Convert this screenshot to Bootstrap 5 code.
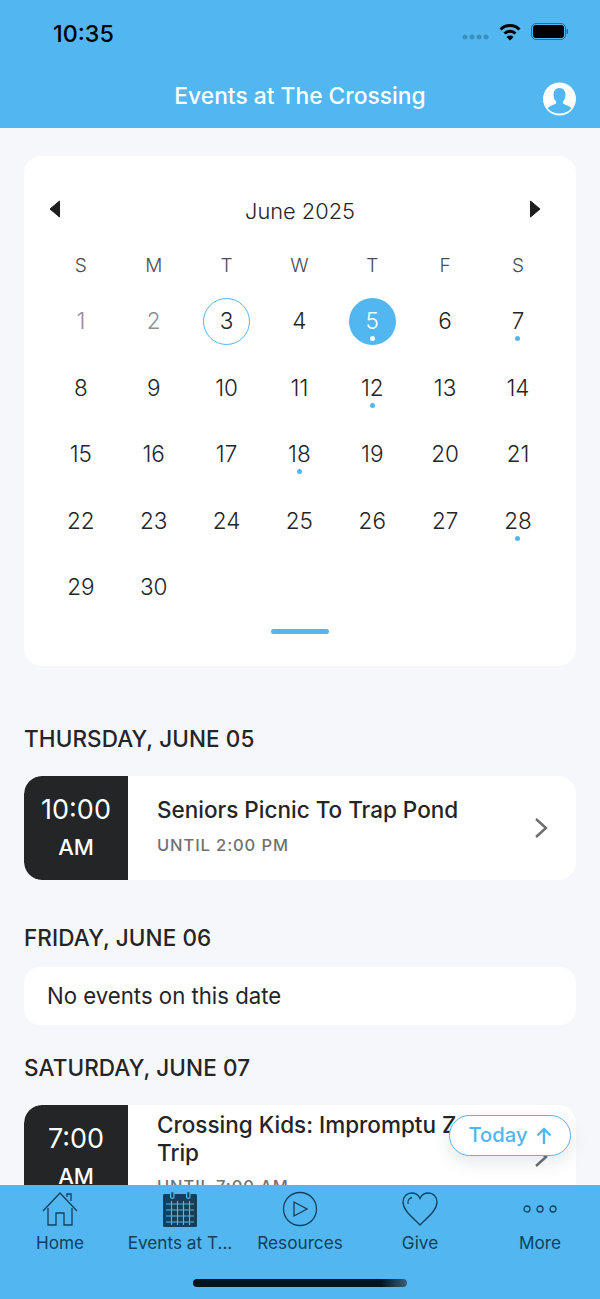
<!DOCTYPE html>
<html lang="en"><head><meta charset="utf-8"><title>Events</title>
<link href="https://cdn.jsdelivr.net/npm/bootstrap@5.3.0/dist/css/bootstrap.min.css" rel="stylesheet">
<style>
:root{--sky:#52b6f0;--ink:#232527;--tabink:#12405c}
html,body{margin:0;height:1299px;overflow:hidden}
body{font-family:Inter,"Liberation Sans",sans-serif;background:#f5f7fb;color:var(--ink)}
.app{height:1299px;width:600px;position:relative}
.topbar{height:128px;background:var(--sky);flex:none}
.status{height:66px;padding:0 32px 0 53px}
.clock{font-size:23.300px;font-weight:500;color:#000;line-height:1;margin-top:1px}
.titlebar{height:62px;padding:0 24px 0 0;position:relative}
.apptitle{font-size:22.800px;font-weight:500;color:#fff;position:absolute;left:0;right:0;top:14px;text-align:center;line-height:32px}
.avatar{position:absolute;left:543px;top:16px}
.content{flex:1 1 0;min-height:0;overflow:hidden;padding:28px 24px 0}
.calcard{height:510px;background:#fff;border-radius:18px;padding:0 21px;position:relative}
.calhead{height:111px;padding-top:37px}
.navprev{margin:7px 10px 0 4px;flex:none}
.navnext{margin:7px 14px 0 0;flex:none}
.month{font-size:21.800px;font-weight:300;line-height:36px;text-align:center;flex:1}
.wk{display:grid;grid-template-columns:repeat(7,1fr);text-align:center;margin-left:-.6px;margin-right:.6px}
.wkd{font-size:19px;font-weight:300;color:#4a4c4f;line-height:20px;height:20px}
.wkrow{margin-top:-11px;margin-bottom:12px}
.daycell{height:66.5px;display:flex;align-items:center;justify-content:center;position:relative;font-size:22.500px;font-weight:300}
.daycell.off{color:#8e9092}
.circ{width:47px;height:47px;border-radius:50%;display:flex;align-items:center;justify-content:center}
.circ.today{border:1px solid var(--sky)}
.circ.sel{background:var(--sky);color:#fff}
.dot{position:absolute;width:5px;height:5px;border-radius:50%;background:var(--sky);left:50%;margin-left:-2.5px;top:48px}
.dot.w{background:#fff}
.handle{position:absolute;left:247px;top:473px;width:58px;height:5px;border-radius:3px;background:var(--sky)}
.dayhead{font-size:22.500px;font-weight:500;line-height:28px;letter-spacing:.1px}
.evt{background:#fff;border-radius:18px;overflow:hidden;display:flex}
.tbox{width:104px;flex:none;background:var(--ink);color:#fff;text-align:center;border-radius:18px 0 0 18px}
.tbig{font-size:27px;font-weight:400;line-height:32px}
.tsub{font-size:22px;font-weight:500;line-height:30px}
.einfo{padding-left:29px;flex:1;min-width:0;position:relative}
.ename{font-size:22.500px;font-weight:500;line-height:28px}
.euntil{font-size:16.500px;font-weight:500;color:#6f7173;letter-spacing:.9px;line-height:22px}
.chev{position:absolute;left:406px;top:41px}
.noevt{height:58px;background:#fff;border-radius:16px;padding-left:23px;font-size:22.200px;line-height:58px;font-weight:400}
.h1gap{margin-top:59px}.evgap{margin-top:23px}.h2gap{margin-top:44px}.h3gap{margin-top:29px}.ngap{margin-top:15px}
.ev1{height:104px}.ev2{height:160px}
.tb1{padding-top:18px}.tb2{padding-top:18px}.am{margin-top:6px}
.ei1{padding-top:20px}.ei2{padding-top:6px}.ungap{margin-top:10px}.ungap2{margin-top:8px}
.nowr{white-space:nowrap}
.todaybtn{position:absolute;left:449px;top:1115px;width:122px;height:41px;border:1px solid var(--sky);border-radius:21px;background:#fff;color:var(--sky);font-size:20.200px;font-weight:500;box-shadow:0 6px 18px rgba(40,60,80,.12);padding:0}
.tabbar{height:114px;background:var(--sky);flex:none;position:relative;color:var(--tabink)}
.tabi{flex:1 1 0;text-align:center;padding-top:2px;min-width:0}
.tabicon{height:44px;display:flex;align-items:center;justify-content:center}
.tablabel{font-size:17.200px;line-height:20px;margin-top:2px;white-space:nowrap}
.homebar{position:absolute;left:193px;top:94px;width:214px;height:8px;border-radius:4px;background:linear-gradient(90deg,#04141f 0,#04141f 88%,#3a5f78 100%)}
</style></head><body>
<div class="app d-flex flex-column">
<div class="topbar">
 <div class="status d-flex align-items-center justify-content-between">
  <div class="clock">10:35</div>
  <svg width="106" height="24" viewBox="0 0 106 24">
   <g fill="#3d8fc0"><circle cx="3" cy="16" r="2.500"/><circle cx="10" cy="16" r="2.500"/><circle cx="17" cy="16" r="2.500"/><circle cx="24" cy="16" r="2.500"/></g>
   <path d="M38.500 8.500A13.500 13.500 0 0 1 57.500 8.500M42.500 12.500A8 8 0 0 1 53.500 12.500" fill="none" stroke="#000" stroke-width="3"/>
   <path d="M48 19.500l-3.500-3.500a5 5 0 0 1 7 0z" fill="#000"/>
   <rect x="69.500" y="2.500" width="34" height="16" rx="4.500" fill="none" stroke="#2b6a92"/>
   <rect x="71" y="4" width="31" height="13" rx="3" fill="#000"/>
   <rect x="104.500" y="8" width="1.500" height="5" rx=".7" fill="#2b6a92"/>
  </svg>
 </div>
 <div class="titlebar">
  <div class="apptitle">Events at The Crossing</div>
  <svg class="avatar" width="33" height="34" viewBox="0 0 33 34"><circle cx="16.500" cy="17" r="16.500" fill="#fff"/><path d="M16.500 6c3.800 0 6 2.900 6 6.800 0 2.900-1.100 5.200-2.600 6.700v1.800c0 .9 4.500 2 7.200 3.600.8.500 1.100 1 1.200 1.500a16 16 0 0 1-23.600 0c.1-.5.400-1 1.200-1.500 2.700-1.600 7.200-2.700 7.200-3.600v-1.800c-1.500-1.500-2.600-3.800-2.600-6.700C10.500 8.900 12.700 6 16.500 6z" fill="#52b6f0"/></svg>
 </div>
</div>
<div class="content">
 <div class="calcard">
  <div class="calhead d-flex align-items-start">
   <svg class="navprev" width="12" height="18" viewBox="0 0 12 18"><path d="M10.500 1v16L1 9z" fill="#1c1e20" stroke="#1c1e20" stroke-linejoin="round"/></svg>
   <div class="month">June 2025</div>
   <svg class="navnext" width="12" height="18" viewBox="0 0 12 18"><path d="M1.500 1v16L11 9z" fill="#1c1e20" stroke="#1c1e20" stroke-linejoin="round"/></svg>
  </div>
  <div class="wk wkrow">
   <div class="wkd">S</div><div class="wkd">M</div><div class="wkd">T</div><div class="wkd">W</div><div class="wkd">T</div><div class="wkd">F</div><div class="wkd">S</div>
  </div>
  <div class="wk">
   <div class="daycell off">1</div><div class="daycell off">2</div>
   <div class="daycell"><div class="circ today">3</div></div>
   <div class="daycell">4</div>
   <div class="daycell"><div class="circ sel">5</div><span class="dot w"></span></div>
   <div class="daycell">6</div>
   <div class="daycell">7<span class="dot"></span></div>
   <div class="daycell">8</div><div class="daycell">9</div><div class="daycell">10</div><div class="daycell">11</div>
   <div class="daycell">12<span class="dot"></span></div>
   <div class="daycell">13</div><div class="daycell">14</div>
   <div class="daycell">15</div><div class="daycell">16</div><div class="daycell">17</div>
   <div class="daycell">18<span class="dot"></span></div>
   <div class="daycell">19</div><div class="daycell">20</div><div class="daycell">21</div>
   <div class="daycell">22</div><div class="daycell">23</div><div class="daycell">24</div><div class="daycell">25</div><div class="daycell">26</div><div class="daycell">27</div>
   <div class="daycell">28<span class="dot"></span></div>
   <div class="daycell">29</div><div class="daycell">30</div>
  </div>
  <div class="handle"></div>
 </div>
 <div class="dayhead h1gap">THURSDAY, JUNE 05</div>
 <div class="evt ev1 evgap">
  <div class="tbox tb1"><div class="tbig">10:00</div><div class="tsub am">AM</div></div>
  <div class="einfo ei1">
   <div class="ename">Seniors Picnic To Trap Pond</div>
   <div class="euntil ungap">UNTIL 2:00 PM</div>
   <svg class="chev" width="14" height="22" viewBox="0 0 14 22"><path d="M2 2l10 9-10 9" fill="none" stroke="#6b6d70" stroke-width="2.400"/></svg>
  </div>
 </div>
 <div class="dayhead h2gap">FRIDAY, JUNE 06</div>
 <div class="noevt ngap">No events on this date</div>
 <div class="dayhead h3gap">SATURDAY, JUNE 07</div>
 <div class="evt ev2 evgap">
  <div class="tbox tb2"><div class="tbig">7:00</div><div class="tsub am">AM</div></div>
  <div class="einfo ei2">
   <div class="ename nowr">Crossing Kids: Impromptu Zoo</div>
   <div class="ename">Trip</div>
   <div class="euntil ungap2">UNTIL 7:00 AM</div>
   <svg class="chev" width="14" height="22" viewBox="0 0 14 22"><path d="M2 2l10 9-10 9" fill="none" stroke="#6b6d70" stroke-width="2.400"/></svg>
  </div>
 </div>
</div>
<div class="tabbar d-flex">
 <div class="tabi"><div class="tabicon"><svg width="36" height="36" viewBox="0 0 36 36" fill="none" stroke="#12405c" stroke-width="1.300"><path d="M1 20L18 2l17 18M6 17v17h8V22h8v12h8V17M25 6V3h4v7"/></svg></div><div class="tablabel">Home</div></div>
 <div class="tabi"><div class="tabicon"><svg width="36" height="36" viewBox="0 0 36 36"><rect x="1" y="3" width="34" height="33" rx="1.500" fill="#12405c"/><g fill="#52b6f0"><rect x="8" y="0" width="4.500" height="8" rx="2"/><rect x="24" y="0" width="4.500" height="8" rx="2"/></g><g fill="#12405c"><rect x="9.300" y="1.300" width="2" height="5.400"/><rect x="25.300" y="1.300" width="2" height="5.400"/></g><path d="M4 13h28M4 19h28M4 25h28M4 31h28M9.500 10v24M15.500 10v24M21.500 10v24M27.500 10v24" stroke="#52b6f0" stroke-width="1.100"/></svg></div><div class="tablabel">Events at T...</div></div>
 <div class="tabi"><div class="tabicon"><svg width="36" height="36" viewBox="0 0 36 36" fill="none" stroke="#12405c" stroke-width="1.300"><circle cx="18" cy="18" r="16.500"/><path d="M12 11v14l13-7z"/></svg></div><div class="tablabel">Resources</div></div>
 <div class="tabi"><div class="tabicon"><svg width="36" height="36" viewBox="0 0 36 36" fill="none" stroke="#12405c" stroke-width="1.300"><path d="M18 34C9 25 1 19 1 11 1 5.500 5 2 9.500 2 13 2 16.500 4 18 7.500 19.500 4 23 2 26.500 2 31 2 35 5.500 35 11c0 8-8 14-17 23z"/><path d="M6 13c-.6-3.500 1.400-6 4-6.500"/></svg></div><div class="tablabel">Give</div></div>
 <div class="tabi"><div class="tabicon"><svg width="36" height="10" viewBox="0 0 36 10" fill="none" stroke="#12405c" stroke-width="1.300"><circle cx="5" cy="5" r="3"/><circle cx="18" cy="5" r="3"/><circle cx="31" cy="5" r="3"/></svg></div><div class="tablabel">More</div></div>
 <div class="homebar"></div>
</div>
<button type="button" class="btn todaybtn d-flex align-items-center justify-content-center gap-2">Today <svg width="16" height="18" viewBox="0 0 16 18" fill="none" stroke="#52b6f0" stroke-width="2.400"><path d="M8 17V2M1.500 8.500L8 2l6.500 6.500"/></svg></button>
</div>
<script src="https://cdn.jsdelivr.net/npm/bootstrap@5.3.0/dist/js/bootstrap.bundle.min.js"></script>
</body></html>
